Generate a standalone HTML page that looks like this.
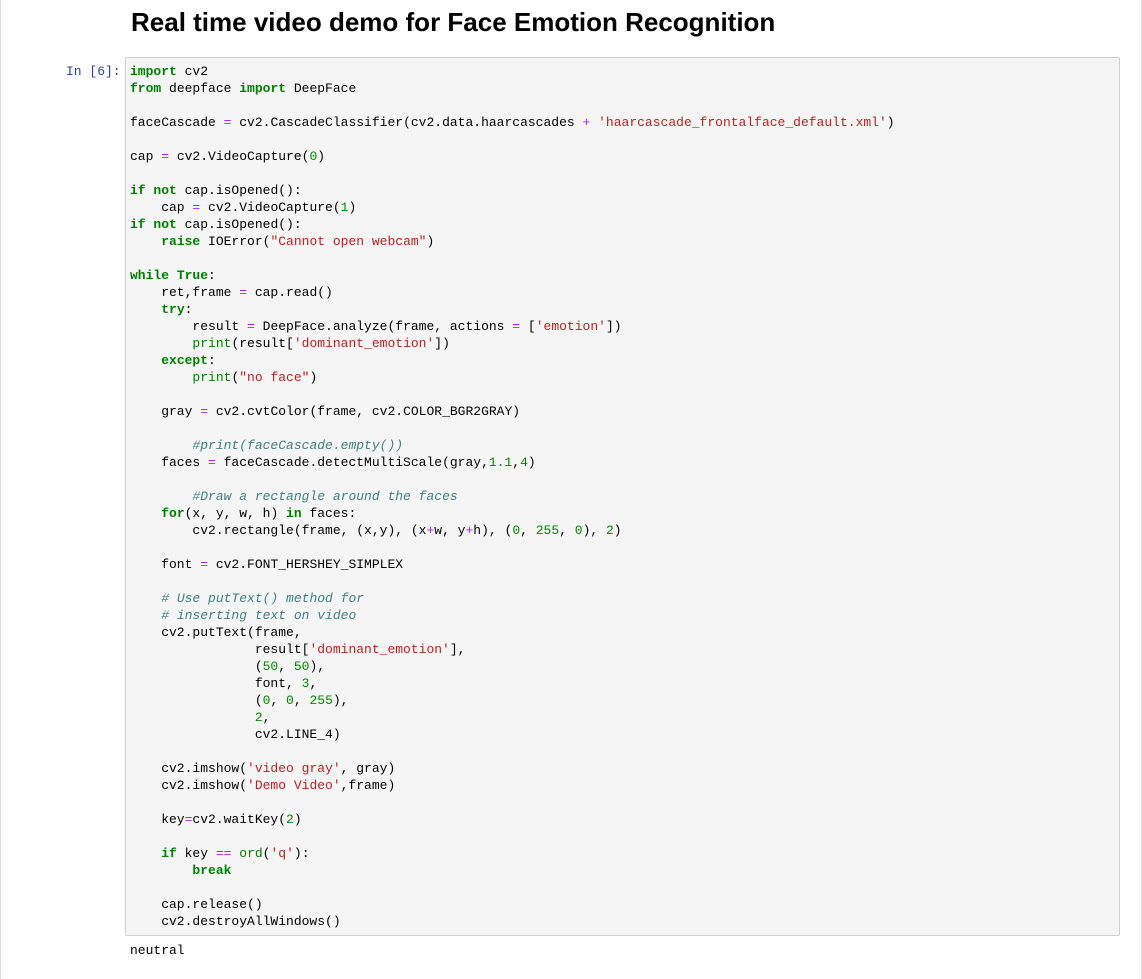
<!DOCTYPE html>
<html><head><meta charset="utf-8"><style>
body{margin:0;width:1142px;height:963px;background:#fff;position:relative;overflow:hidden;font-family:"Liberation Sans",sans-serif}
.frame{position:absolute;left:0;top:-1px;width:1140px;height:980px;border-left:1px solid #ddd;border-right:1px solid #ddd}
h1{position:absolute;left:131px;top:7px;margin:0;font-size:26px;font-weight:bold;color:#000}
.prompt{position:absolute;left:66px;top:63px;font:13px/17px "Liberation Mono",monospace;color:#303f9f}
.box{position:absolute;left:125px;top:57px;width:993px;height:877px;background:#f5f5f5;border:1px solid #cfcfcf;border-radius:2px}
pre{position:absolute;left:130px;top:63px;margin:0;font:13px/17px "Liberation Mono",monospace;color:#000}
.out{position:absolute;left:130px;top:942px;margin:0;font:13px/17px "Liberation Mono",monospace;color:#000}
.k{color:#008000;font-weight:bold}.o{color:#aa22ff}.s{color:#ba2121}.n{color:#080}.c{color:#408080;font-style:italic}.b{color:#008000}
</style></head><body>
<div class="frame"></div>
<h1>Real time video demo for Face Emotion Recognition</h1>
<div class="prompt">In [6]:</div>
<div class="box"></div>
<pre><span class="k">import</span> cv2
<span class="k">from</span> deepface <span class="k">import</span> DeepFace

faceCascade <span class="o">=</span> cv2.CascadeClassifier(cv2.data.haarcascades <span class="o">+</span> <span class="s">'haarcascade_frontalface_default.xml'</span>)

cap <span class="o">=</span> cv2.VideoCapture(<span class="n">0</span>)

<span class="k">if</span> <span class="k">not</span> cap.isOpened():
    cap <span class="o">=</span> cv2.VideoCapture(<span class="n">1</span>)
<span class="k">if</span> <span class="k">not</span> cap.isOpened():
    <span class="k">raise</span> IOError(<span class="s">"Cannot open webcam"</span>)

<span class="k">while</span> <span class="k">True</span>:
    ret,frame <span class="o">=</span> cap.read()
    <span class="k">try</span>:
        result <span class="o">=</span> DeepFace.analyze(frame, actions <span class="o">=</span> [<span class="s">'emotion'</span>])
        <span class="b">print</span>(result[<span class="s">'dominant_emotion'</span>])
    <span class="k">except</span>:
        <span class="b">print</span>(<span class="s">"no face"</span>)

    gray <span class="o">=</span> cv2.cvtColor(frame, cv2.COLOR_BGR2GRAY)

        <span class="c">#print(faceCascade.empty())</span>
    faces <span class="o">=</span> faceCascade.detectMultiScale(gray,<span class="n">1.1</span>,<span class="n">4</span>)

        <span class="c">#Draw a rectangle around the faces</span>
    <span class="k">for</span>(x, y, w, h) <span class="k">in</span> faces:
        cv2.rectangle(frame, (x,y), (x<span class="o">+</span>w, y<span class="o">+</span>h), (<span class="n">0</span>, <span class="n">255</span>, <span class="n">0</span>), <span class="n">2</span>)

    font <span class="o">=</span> cv2.FONT_HERSHEY_SIMPLEX

    <span class="c"># Use putText() method for</span>
    <span class="c"># inserting text on video</span>
    cv2.putText(frame,
                result[<span class="s">'dominant_emotion'</span>],
                (<span class="n">50</span>, <span class="n">50</span>),
                font, <span class="n">3</span>,
                (<span class="n">0</span>, <span class="n">0</span>, <span class="n">255</span>),
                <span class="n">2</span>,
                cv2.LINE_4)

    cv2.imshow(<span class="s">'video gray'</span>, gray)
    cv2.imshow(<span class="s">'Demo Video'</span>,frame)

    key<span class="o">=</span>cv2.waitKey(<span class="n">2</span>)

    <span class="k">if</span> key <span class="o">==</span> <span class="b">ord</span>(<span class="s">'q'</span>):
        <span class="k">break</span>

    cap.release()
    cv2.destroyAllWindows()</pre>
<div class="out">neutral</div>
</body></html>
